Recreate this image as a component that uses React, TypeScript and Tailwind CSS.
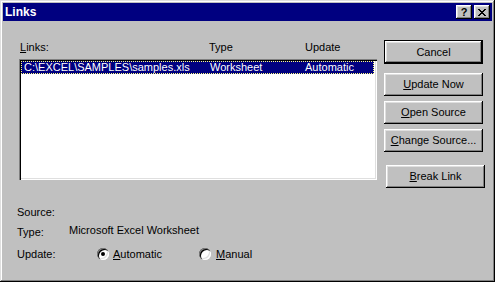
import { ReactNode } from "react";

const raised =
  "bg-[#c0c0c0] shadow-[inset_-1px_-1px_#000,inset_1px_1px_#fff,inset_-2px_-2px_#808080,inset_2px_2px_#dfdfdf]";

function Btn({ children, def, className = "" }: { children: ReactNode; def?: boolean; className?: string }) {
  if (def) {
    return (
      <div className={`h-[24px] w-[99px] border border-black ${className}`}>
        <div className={`h-full w-full flex items-center justify-center ${raised}`}>{children}</div>
      </div>
    );
  }
  return <div className={`h-[23px] w-[99px] flex items-center justify-center ${raised} ${className}`}>{children}</div>;
}

function Radio({ checked }: { checked?: boolean }) {
  return (
    <div className="relative w-[12px] h-[12px] rounded-full bg-white shadow-[inset_1px_1px_#808080,inset_2px_2px_#000,inset_-1px_-1px_#fff,inset_-2px_-2px_#dfdfdf] flex items-center justify-center">
      {checked && <div className="w-[4px] h-[4px] rounded-full bg-black" />}
    </div>
  );
}

export default function App() {
  return (
    <div className="w-[495px] h-[282px] bg-[#c0c0c0] p-[3px] font-['Liberation_Sans',Arial,sans-serif] text-[11px] leading-[13px] text-black shadow-[inset_-1px_-1px_#000,inset_1px_1px_#dfdfdf,inset_-2px_-2px_#808080,inset_2px_2px_#fff]">
      <div className="h-[18px] bg-[#000080] flex items-center justify-between pl-[2px] pr-[2px]">
        <span className="text-white font-bold text-[12px] leading-[14px]">Links</span>
        <div className="flex gap-[2px]">
          <div className={`w-[16px] h-[14px] flex items-center justify-center font-bold text-[11px] leading-none ${raised}`}>?</div>
          <div className={`w-[16px] h-[14px] flex items-center justify-center ${raised}`}>
            <svg width="8" height="7" viewBox="0 0 8 7" shapeRendering="crispEdges">
              <path d="M0 0h2v1h-2zM6 0h2v1h-2zM1 1h2v1h-2zM5 1h2v1h-2zM2 2h4v1h-4zM3 3h2v1h-2zM2 4h4v1h-4zM1 5h2v1h-2zM5 5h2v1h-2zM0 6h2v1h-2zM6 6h2v1h-2z" fill="#000" />
            </svg>
          </div>
        </div>
      </div>

      <div className="flex pl-[16px] pt-[19px]">
        <div className="w-[358px]">
          <div className="h-[19px] relative flex items-start pt-[1px]">
            <span className="w-[190px] pl-[1px]"><u>L</u>inks:</span>
            <span className="w-[96px]">Type</span>
            <span>Update</span>
          </div>
          <div className="h-[121px] bg-white p-[2px] shadow-[inset_1px_1px_#808080,inset_2px_2px_#000,inset_-1px_-1px_#fff,inset_-2px_-2px_#dfdfdf]">
            <div className="h-[13px] w-[353px] bg-[#000080] border border-dotted border-[#ffff80] text-white flex items-center">
              <span className="w-[188px] pl-[2px]">C:\EXCEL\SAMPLES\samples.xls</span>
              <span className="w-[95px]">Worksheet</span>
              <span>Automatic</span>
            </div>
          </div>
        </div>

        <div className="ml-[7px] flex flex-col">
          <Btn def>Cancel</Btn>
          <Btn className="mt-[9px]"><span><u>U</u>pdate Now</span></Btn>
          <Btn className="mt-[5px]"><span><u>O</u>pen Source</span></Btn>
          <Btn className="mt-[5px]"><span><u>C</u>hange Source...</span></Btn>
          <Btn className="mt-[13px] ml-[2px]"><span><u>B</u>reak Link</span></Btn>
        </div>
      </div>

      <div className="pl-[14px] mt-[16px] flex flex-col">
        <div className="h-[17px] flex items-center">Source:</div>
        <div className="h-[19px] flex items-center">
          <span className="w-[52px] pt-[4px]">Type:</span>
          <span>Microsoft Excel Worksheet</span>
        </div>
        <div className="h-[28px] flex items-center">
          <span className="w-[80px]">Update:</span>
          <Radio checked />
          <span className="ml-[4px] w-[86px]"><u>A</u>utomatic</span>
          <Radio />
          <span className="ml-[5px]"><u>M</u>anual</span>
        </div>
      </div>
    </div>
  );
}
